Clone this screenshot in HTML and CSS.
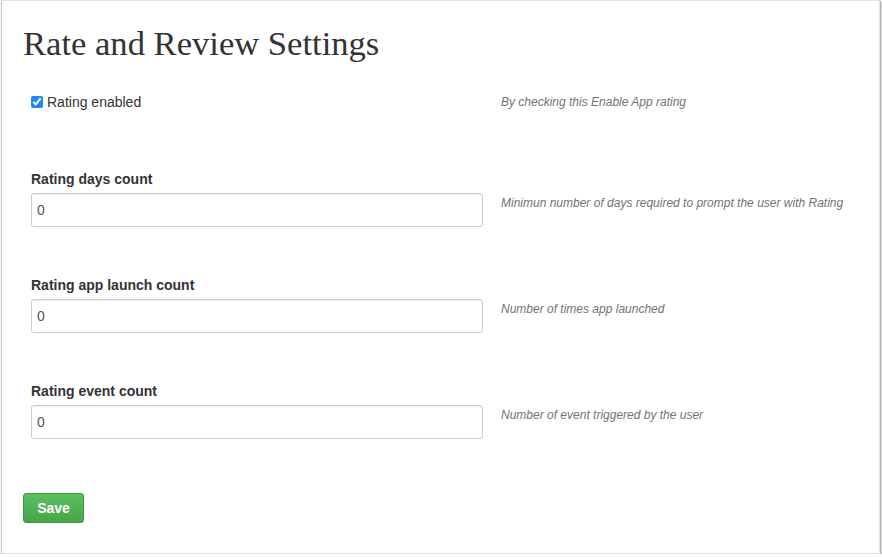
FILE: index.html
```html
<!DOCTYPE html>
<html lang="en">
<head>
    <meta charset="UTF-8">
    <title>Rate and Review Settings</title>
    <link rel="stylesheet" href="styles.css">
</head>
<body>
    <div class="panel">
        <h1 class="title">Rate and Review Settings</h1>
        <form class="form">
            <div class="row row-check">
                <div class="field">
                    <label class="check"><input type="checkbox" checked> Rating enabled</label>
                </div>
                <p class="help help-check">By checking this Enable App rating</p>
            </div>
            <div class="row">
                <div class="field">
                    <label class="lbl">Rating days count</label>
                    <input class="ctl" type="text" value="0">
                </div>
                <p class="help">Minimun number of days required to prompt the user with Rating</p>
            </div>
            <div class="row">
                <div class="field">
                    <label class="lbl">Rating app launch count</label>
                    <input class="ctl" type="text" value="0">
                </div>
                <p class="help">Number of times app launched</p>
            </div>
            <div class="row">
                <div class="field">
                    <label class="lbl">Rating event count</label>
                    <input class="ctl" type="text" value="0">
                </div>
                <p class="help">Number of event triggered by the user</p>
            </div>
            <button class="btn-save" type="button">Save</button>
        </form>
    </div>
</body>
</html>
```

FILE: styles.css
```css
*{
    padding: 0;
    margin: 0;
    box-sizing: border-box;
}
body {
    background: #fff;
    font-family: "Liberation Sans", Arial, sans-serif;
    font-size: 14px;
    color: #333;
}
.panel {
    width: 879px;
    height: 554px;
    margin-left: 1px;
    border: 1px solid #e2e2e2;
    border-left-color: #c8c8c8;
    box-shadow: 1px 1px 2px rgba(0,0,0,0.45);
    padding: 25px 22px 0 21px;
}
.title {
    font-family: Georgia, "Liberation Serif", serif;
    font-weight: normal;
    font-size: 34.6px;
    line-height: 35px;
    height: 35px;
    color: #333;
}
.form {
    margin-top: 31px;
}
.row {
    display: flex;
    margin-bottom: 48px;
}
.row-check {
    margin-bottom: 57px;
}
.field {
    width: 460px;
    padding-left: 8px;
}
.check {
    display: flex;
    align-items: center;
    height: 20px;
    line-height: 20px;
}
.check input {
    width: 12px;
    height: 12px;
    margin: 0 4px 0 0;
    accent-color: #1e88f5;
}
.lbl {
    display: block;
    font-weight: bold;
    line-height: 20px;
    margin-bottom: 4px;
}
.ctl {
    display: block;
    width: 452px;
    height: 34px;
    padding: 6px 5px;
    border: 1px solid #ccc;
    border-radius: 3px;
    box-shadow: inset 0 1px 1px rgba(0,0,0,0.075);
    font-family: "Liberation Sans", Arial, sans-serif;
    font-size: 14px;
    color: #555;
}
.help {
    align-self: flex-end;
    margin-left: 18px;
    margin-bottom: 15px;
    font-size: 12px;
    line-height: 17px;
    font-style: italic;
    color: #737373;
}
.help-check {
    align-self: center;
    margin-bottom: 0;
}
.btn-save {
    display: block;
    margin-top: 54px;
    width: 61px;
    height: 30px;
    border: 1px solid #3e9a3e;
    border-radius: 3px;
    background: linear-gradient(#5cbf61, #45a649);
    color: #fff;
    font-family: "Liberation Sans", Arial, sans-serif;
    font-size: 14px;
    font-weight: bold;
    cursor: pointer;
}
```
